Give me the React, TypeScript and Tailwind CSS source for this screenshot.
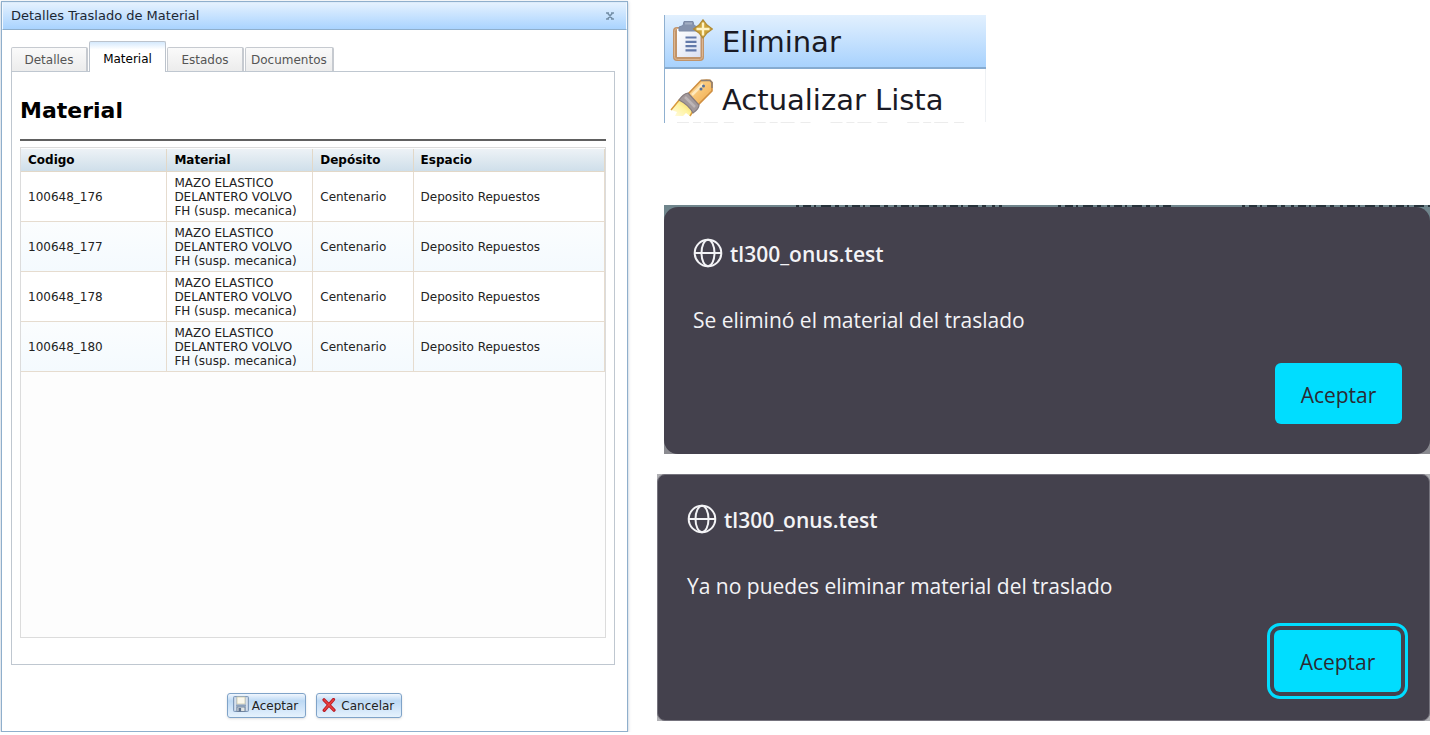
import React from "react";

const TABS = [
  { id: "detalles", label: "Detalles" },
  { id: "material", label: "Material" },
  { id: "estados", label: "Estados" },
  { id: "documentos", label: "Documentos" },
];

const ROWS = ["100648_176", "100648_177", "100648_178", "100648_180"].map((codigo) => ({
  codigo,
  material: "MAZO ELASTICO DELANTERO VOLVO FH (susp. mecanica)",
  deposito: "Centenario",
  espacio: "Deposito Repuestos",
}));

function DiskIcon() {
  return (
    <svg className="mb-1" width="16" height="16" viewBox="0 0 16 16" aria-hidden="true">
      <rect x="0.5" y="0.5" width="15" height="15" rx="1" fill="#b5c6da" stroke="#7f9abb" />
      <path d="M2.200 1.500v13M13.800 1.500v13" stroke="#e4ecf5" strokeWidth="1" />
      <rect x="4" y="1" width="8" height="7" fill="#fbf8ec" stroke="#cdc8ae" strokeWidth="0.8" />
      <path d="M3 9.500h10" stroke="#8da1bd" strokeWidth="1.500" />
      <rect x="4" y="11" width="8" height="4.500" fill="#e3e6e4" stroke="#6b7f9a" strokeWidth="0.9" />
      <rect x="5.500" y="12" width="2.600" height="3.500" fill="#5f7391" />
    </svg>
  );
}

function CrossIcon() {
  return (
    <svg className="mb-[2px]" width="14" height="14" viewBox="0 0 14 14" aria-hidden="true">
      <path d="M2 1.800L12 12.2M11.500 1.500L2.200 12.4" stroke="#b81820" strokeWidth="3.200" strokeLinecap="round" />
      <path d="M2.200 2L11.800 12M11.400 1.800L2.400 12" stroke="#e84040" strokeWidth="1.600" strokeLinecap="round" />
    </svg>
  );
}

function ClipboardIcon() {
  return (
    <svg className="mb-[2px]" width="41" height="42" viewBox="0 0 41 42" aria-hidden="true">
      <defs>
        <linearGradient id="paper" x1="0" y1="0" x2="1" y2="1">
          <stop offset="0" stopColor="#ffffff" />
          <stop offset="1" stopColor="#d9e0f2" />
        </linearGradient>
      </defs>
      <rect x="1" y="8" width="31" height="34" rx="4" fill="#c1946a" />
      <rect x="2.500" y="9.500" width="28" height="31" rx="3" fill="none" stroke="#dcb690" />
      <rect x="5" y="10" width="23.500" height="28" fill="url(#paper)" />
      <path d="M7 12V8L11 6.500L12 2.500H21L22 6.500L26 8V12Z" fill="#8593ad" stroke="#7a89a6" />
      <path d="M13 4.500h7" stroke="#a2aec2" strokeWidth="2" />
      <path d="M13.500 18.500h11M13.500 22.800h11M13.500 27.100h11M13.500 31.400h11" stroke="#6279aa" strokeWidth="2.200" />
      <path d="M31 0.800L35 6L40.400 10L35 14L31 19L27 14L21.600 10L27 6Z" fill="#cda43a" stroke="#b08a34" strokeWidth="1.200" />
      <path d="M31 3.500v13M24.500 10h13" stroke="#fff3c4" strokeWidth="2.400" />
    </svg>
  );
}

function BrushIcon() {
  return (
    <svg width="43" height="42" viewBox="0 0 43 42" aria-hidden="true">
      <defs>
        <linearGradient id="glow" x1="1" y1="0" x2="0" y2="1">
          <stop offset="0" stopColor="#f0c437" />
          <stop offset="0.500" stopColor="#fff3a0" />
          <stop offset="1" stopColor="#fffce8" />
        </linearGradient>
        <linearGradient id="handle" x1="0" y1="0" x2="1" y2="1">
          <stop offset="0" stopColor="#ffe0a0" />
          <stop offset="1" stopColor="#f0a848" />
        </linearGradient>
      </defs>
      <path d="M1 31L10 20L23 32L20 37L16 34L13 37H5L7 33Z" fill="url(#glow)" />
      <path d="M1 31L10 20M20 37L23 32" stroke="#d99a3c" strokeWidth="1.500" />
      <path d="M31 1.500Q33 1 40 1.200L42 3.500V12L28 26L18 15Z" fill="url(#handle)" stroke="#cf8f42" strokeWidth="1.600" />
      <path d="M31 1.500H40L42 3.500V9" fill="none" stroke="#8d7f74" strokeWidth="1.500" />
      <path d="M33 5L22 16" stroke="#ffe9bd" strokeWidth="2.500" />
      <circle cx="33.500" cy="7" r="1.500" fill="#54719d" />
      <circle cx="31" cy="10" r="1.500" fill="#54719d" />
      <path d="M18 14L29 26Q29 30 23 34Q19 26 9 21Q13 15 18 14Z" fill="#a39a9c" stroke="#857b7e" strokeWidth="1.200" />
      <path d="M15 18L25 28" stroke="#bdb5b6" strokeWidth="2.500" />
    </svg>
  );
}

function GlobeIcon() {
  return (
    <svg width="30" height="30" viewBox="0 0 30 30" fill="none" stroke="#f3f3f6" strokeWidth="2" aria-hidden="true">
      <circle cx="15" cy="15" r="13.300" />
      <ellipse cx="15" cy="15" rx="6.500" ry="13.300" />
      <path d="M1.700 15h26.600" />
    </svg>
  );
}

function MaterialDialog() {
  const button =
    "flex h-[25px] items-center rounded-[3px] border border-[#7fa3c8] bg-linear-to-b from-[#f0f6fd] via-[#bdd9f4] via-30% to-[#e6f2fd] px-[5px] text-[12px] text-[#222] shadow-sm";
  return (
    <section
      aria-label="Detalles Traslado de Material"
      className="ml-px border border-[#8fafcc] bg-white pb-[13px] font-['DejaVu_Sans',sans-serif] shadow-[0_1px_3px_rgba(90,120,150,0.45)]"
    >
      <header className="flex h-7 items-center justify-between border border-b-[#8fafcc] border-t-[#dcebfa] border-x-[#f2f8fe] bg-linear-to-b from-[#e4f1fe] to-[#a9d3fe] pr-3 pl-2">
        <h1 className="text-[13px] text-[#1c2733]">Detalles Traslado de Material</h1>
        <button type="button" aria-label="Cerrar" className="text-[#7590a8]">
          <svg width="8" height="8" viewBox="0 0 8 8" aria-hidden="true">
            <path d="M0 1h3M5 1h3M0 7h3M5 7h3M1.500 1L6.500 7M6.500 1L1.500 7" stroke="currentColor" strokeWidth="1.500" />
          </svg>
        </button>
      </header>

      <div className="mx-[9px] mt-[11px]">
        <div role="tablist" className="flex items-end gap-px">
          {TABS.map((tab) =>
            tab.id === "material" ? (
              <button
                key={tab.id}
                type="button"
                role="tab"
                aria-selected="true"
                className="relative -mb-px h-[31px] min-w-[77px] rounded-t-[2px] border border-b-0 border-[#bcc3cc] bg-linear-to-b from-[#d5e9fc] to-white to-25% pt-1 text-[12px] text-black"
              >
                {tab.label}
              </button>
            ) : (
              <button
                key={tab.id}
                type="button"
                role="tab"
                aria-selected="false"
                className="h-[24px] min-w-[77px] rounded-t-[2px] border border-r-2 border-b-0 border-[#c6cad0] bg-linear-to-b from-[#fafafa] to-[#ececec] px-[5px] text-[12px] text-[#555]"
              >
                {tab.label}
              </button>
            ),
          )}
        </div>

        <div role="tabpanel" className="mr-[3px] border border-[#bfc7d0] px-2 pt-[25px] pb-[26px]">
          <h2 className="text-[22px] leading-[28px] font-bold text-black">Material</h2>
          <hr className="mt-[14px] mb-[6px] border-t-2 border-[#606060]" />
          <div className="min-h-[491px] border border-[#dcdcdc] bg-[#fdfdfd] pt-px">
            <table className="w-full table-fixed border-collapse text-left text-[12px] leading-[14px] text-[#222]">
              <colgroup>
                <col className="w-[25%]" />
                <col className="w-[25%]" />
                <col className="w-[17.2%]" />
                <col />
              </colgroup>
              <thead>
                <tr className="h-[22px] bg-linear-to-b from-[#edf2f6] to-[#cfdfea] text-black">
                  {["Codigo", "Material", "Depósito", "Espacio"].map((title) => (
                    <th key={title} scope="col" className="border-r border-b border-[#e2d8c8] px-[7px] pt-px pb-0 font-bold">
                      {title}
                    </th>
                  ))}
                </tr>
              </thead>
              <tbody>
                {ROWS.map((row) => (
                  <tr key={row.codigo} className="h-[50px] bg-white even:bg-linear-to-b even:from-[#fbfdfe] even:to-[#f4fafe]">
                    {[row.codigo, row.material, row.deposito, row.espacio].map((value) => (
                      <td key={value} className="border-r border-b border-[#e6dccf] px-[7px] pt-px pb-0">
                        {value}
                      </td>
                    ))}
                  </tr>
                ))}
              </tbody>
            </table>
          </div>
        </div>
      </div>

      <footer className="mt-7 flex justify-center gap-[10px]">
        <button type="button" className={button}>
          <DiskIcon />
          <span className="pr-[2px] pl-[3px]">Aceptar</span>
        </button>
        <button type="button" className={button}>
          <CrossIcon />
          <span className="pr-[2px] pl-[5px]">Cancelar</span>
        </button>
      </footer>
    </section>
  );
}

function ContextMenu() {
  return (
    <div
      role="menu"
      className="ml-9 w-[322px] border-l border-[#8fb0d0] bg-white font-['DejaVu_Sans',sans-serif] text-[29px] text-[#1a1a24]"
    >
      <button
        type="button"
        role="menuitem"
        className="flex h-[54px] w-full items-center gap-[9px] border-b-2 border-[#86abd0] bg-linear-to-b from-[#e2f0fe] to-[#a8d2fd] pl-[7px]"
      >
        <ClipboardIcon />
        <span className="pt-[3px]">Eliminar</span>
      </button>
      <button type="button" role="menuitem" className="flex h-[53px] w-full items-center gap-[9px] border-r border-[#eef1f4] pt-2 pl-[5px]">
        <BrushIcon />
        <span className="pt-[3px]">Actualizar Lista</span>
      </button>
      <svg className="block h-px w-full" viewBox="0 0 322 1" preserveAspectRatio="none" aria-hidden="true">
        <path d="M12 0.500H302" stroke="#ececec" strokeDasharray="12 4 8 3 14 6 10 20" />
      </svg>
    </div>
  );
}

type AlertProps = { host: string; message: string; focused?: boolean };

function BrowserAlert({ host, message, focused = false }: AlertProps) {
  return (
    <div
      role="alertdialog"
      aria-label={message}
      className={
        "flex flex-col items-start bg-[#44414d] pr-7 pl-[29px] font-['Open_Sans',sans-serif] text-[21px] leading-[30px] text-[#f3f3f6] " +
        (focused
          ? "rounded-[8px] border border-[#75737d] pt-7 pb-7"
          : "rounded-[14px] pt-[30px] pb-[30px]")
      }
    >
      <div className="flex items-center gap-[7px]">
        <GlobeIcon />
        <span className="pt-[2px] font-semibold">{host}</span>
      </div>
      <p className="mt-9">{message}</p>
      <button
        type="button"
        className={
          "w-[127px] self-end rounded-[6px] bg-[#00ddff] pt-[2px] text-[#2b2a33] " +
          (focused ? "mt-[29px] h-[62px] outline-3 outline-offset-4 outline-[#00ddff]" : "mt-7 h-[61px]")
        }
      >
        Aceptar
      </button>
    </div>
  );
}

export default function App() {
  return (
    <main className="grid grid-cols-[628fr_802fr] items-start bg-white pt-px">
      <MaterialDialog />
      <div className="flex flex-col pt-[14px]">
        <ContextMenu />
        <div className="mt-[82px] ml-9 bg-linear-to-b from-[#6f858c] to-[#8a8a90]">
          <svg className="block h-[2px] w-full" viewBox="0 0 766 2" preserveAspectRatio="none" aria-hidden="true">
            <path
              d="M132 1H338M394 1H510M578 1H766"
              stroke="#26323a"
              strokeWidth="2"
              strokeDasharray="3 4 8 3 2 5 10 4 4 6"
            />
          </svg>
          <BrowserAlert host="tl300_onus.test" message="Se eliminó el material del traslado" />
        </div>
        <div className="mt-5 ml-[29px] bg-[#b0b0b4]">
          <BrowserAlert host="tl300_onus.test" message="Ya no puedes eliminar material del traslado" focused />
        </div>
      </div>
    </main>
  );
}
